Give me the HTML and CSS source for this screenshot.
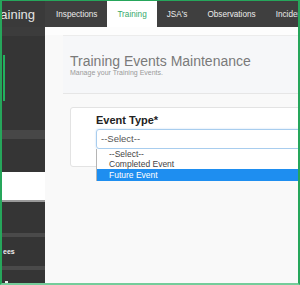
FILE: index.html
```html
<!DOCTYPE html>
<html lang="en">
<head>
  <meta charset="UTF-8">
  <title>Training Events Maintenance</title>
  <link rel="stylesheet" href="styles.css">
</head>
<body>

  <div class="frame">
    <div class="brand"><span>Training</span></div>

    <ul class="topnav">
      <li>Inspections</li>
      <li class="active">Training</li>
      <li>JSA's</li>
      <li>Observations</li>
      <li>Incidents</li>
    </ul>

    <div class="sidebar">
      <div class="side-top"></div>
      <div class="side-current"></div>
      <div class="side-gap-1"></div>
      <div class="side-band"></div>
      <div class="side-gap-2"></div>
      <div class="side-white"></div>
      <div class="side-gap-3"></div>
      <div class="side-band thin"></div>
      <div class="side-label">ees</div>
      <div class="side-band thin"></div>
      <div class="side-rest"><span class="side-dot"></span></div>
    </div>

    <div class="main">
      <div class="page-head">
        <h1>Training Events Maintenance</h1>
        <p>Manage your Training Events.</p>
      </div>

      <div class="card">
        <label class="field-label">Event Type*</label>
        <div class="select-wrap">
          <div class="select-box">--Select--</div>
          <ul class="select-list">
            <li>--Select--</li>
            <li>Completed Event</li>
            <li class="hl">Future Event</li>
          </ul>
        </div>
      </div>
    </div>
  </div>

</body>
</html>
```

FILE: styles.css
```css
body {
  margin: 0;
  font-family: "Liberation Sans", Arial, sans-serif;
  background: #fff;
}

.frame {
  width: 300px;
  height: 285px;
  box-sizing: border-box;
  border: 2px solid #26a65b;
  border-top-width: 1px;
  border-bottom-color: #74cc9a;
  display: grid;
  grid-template-columns: 43px 1fr;
  grid-template-rows: 26px 1fr;
  overflow: hidden;
  background: #f9f9f9;
}

.brand {
  background: #3a3a3a;
  color: #e4e4e4;
  font-size: 13px;
  display: flex;
  align-items: center;
  justify-content: flex-end;
  overflow: hidden;
  padding-right: 10px;
}

.topnav {
  list-style: none;
  margin: 0;
  padding: 0 0 0 1px;
  display: flex;
  background: #3f3f3f;
  overflow: hidden;
  white-space: nowrap;
}

.topnav li {
  color: #ececec;
  font-size: 8.2px;
  padding: 0 10px;
  display: flex;
  align-items: center;
}

.topnav li.active {
  background: #fff;
  color: #36a96b;
}

.sidebar {
  background: #353535;
  display: flex;
  flex-direction: column;
}

.side-top {
  height: 28px;
  background: linear-gradient(#3c3c3c 0, #3c3c3c 9px, #353535 9px);
}

.side-current {
  height: 46px;
  width: 2px;
  background: #22b35e;
  margin-left: 1px;
}

.side-gap-1 { height: 29px; }

.side-band {
  height: 9px;
  background: #474747;
}

.side-band.thin {
  height: 4px;
  background: #4a4a4a;
}

.side-gap-2 { height: 33px; }

.side-white {
  height: 28px;
  background: #fff;
  border-bottom: 2px solid #9a9a9a;
}

.side-gap-3 { height: 31px; }

.side-label {
  color: #f0f0f0;
  font-size: 7px;
  font-weight: bold;
  height: 29px;
  display: flex;
  align-items: center;
  padding-left: 1px;
}

.side-rest {
  flex: 1;
  position: relative;
}

.side-dot {
  position: absolute;
  left: 3px;
  bottom: 0;
  width: 3px;
  height: 2px;
  background: #eee;
}

.main {
  padding: 8px 0 0 18px;
  overflow: hidden;
  background: linear-gradient(#fdfdfd 0, #fdfdfd 8px, #f9f9f9 8px);
}

.page-head {
  background: #f6f7f9;
  border-top: 1px solid #ececec;
  border-bottom: 1px solid #e6e6e6;
  padding: 17px 0 0 7px;
  height: 40px;
  margin-right: -40px;
}

.page-head h1 {
  margin: 0;
  font-weight: normal;
  font-size: 14px;
  line-height: 16px;
  color: #7a7a7a;
}

.page-head p {
  margin: 0;
  font-size: 7px;
  line-height: 8px;
  color: #9a9a9a;
}

.card {
  margin: 13px -60px 0 7px;
  background: #fff;
  border: 1px solid #e3e3e3;
  border-radius: 3px;
  padding: 6px 0 17px 25px;
}

.field-label {
  display: block;
  font-size: 11px;
  font-weight: bold;
  line-height: 13px;
  color: #222;
}

.select-wrap {
  position: relative;
  margin-top: 2px;
}

.select-box {
  height: 18px;
  border: 1px solid #a8cdee;
  border-radius: 3px;
  box-shadow: 0 0 2px rgba(100, 160, 230, 0.4);
  font-size: 9.5px;
  line-height: 18px;
  padding-left: 4px;
  color: #555;
}

.select-list {
  position: absolute;
  top: 100%;
  left: 0;
  right: 0;
  margin: 0;
  padding: 0;
  list-style: none;
  background: #fff;
  border-left: 1px solid #b5b5b5;
  z-index: 2;
}

.select-list li {
  font-size: 8.5px;
  line-height: 10px;
  padding-left: 12px;
  color: #444;
}

.select-list li.hl {
  background: #1e8ef0;
  color: #fff;
  line-height: 12px;
}
```
